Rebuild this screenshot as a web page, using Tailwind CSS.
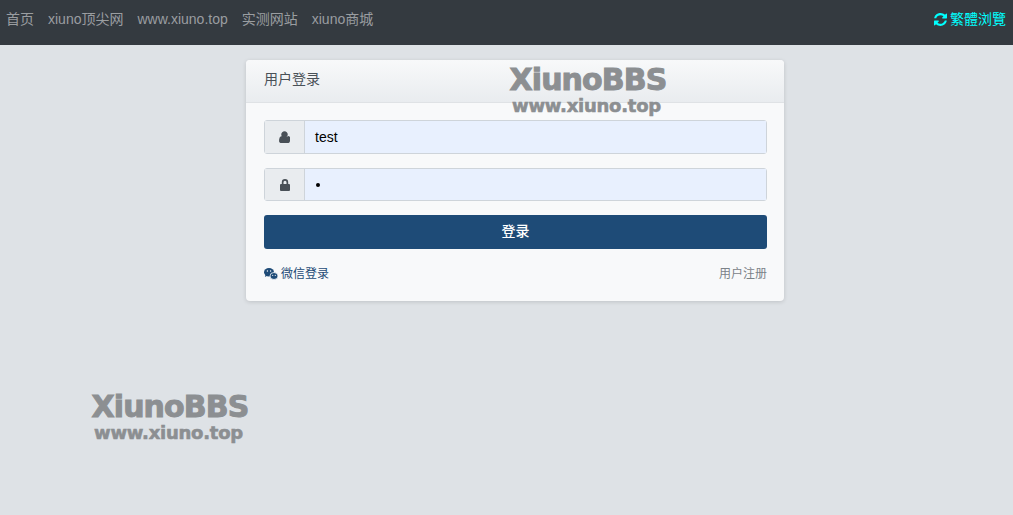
<!DOCTYPE html>
<html lang="zh">
<head>
<meta charset="utf-8">
<script src="https://cdn.jsdelivr.net/npm/@tailwindcss/browser@4"></script>
<title>用户登录</title>
</head>
<body class="relative h-[515px] w-[1013px] overflow-hidden bg-[#dee2e6] font-['Liberation_Sans','Noto_Sans_CJK_SC',sans-serif] text-sm">
<nav class="flex h-[45px] items-start justify-between bg-[#343a40] pl-[6px] pr-[7px] pt-[11px] text-sm leading-[17px]">
  <div class="flex gap-[14px] text-[#9a9da0]">
    <a>首页</a><a>xiuno顶尖网</a><a>www.xiuno.top</a><a>实测网站</a><a>xiuno商城</a>
  </div>
  <a class="flex items-center gap-[3px] text-[#00ffff]">
    <svg class="h-[13px] w-[13px]" viewBox="0 0 1536 1536" fill="currentColor"><path d="M1511 928q0 5-1 7-64 268-268 434.500T764 1536q-146 0-282.500-55T238 1324l-129 129q-19 19-45 19t-45-19-19-45V960q0-26 19-45t45-19h448q26 0 45 19t19 45-19 45l-137 137q71 66 161 102t187 36q134 0 250-65t186-179q11-17 53-117 8-23 30-23h192q13 0 22.500 9.500t9.500 22.500zM1536 128v448q0 26-19 45t-45 19h-448q-26 0-45-19t-19-45 19-45l138-138q-148-137-349-137-134 0-250 65T332 480q-11 17-53 117-8 23-30 23H50q-13 0-22.500-9.500T18 588v-7q65-268 270-434.500T768 0q146 0 284 55.500T1297 212l130-129q19-19 45-19t45 19 19 45z"/></svg>
    <span>繁體浏覽</span>
  </a>
</nav>

<main class="ml-[246px] mt-[15px] w-[538px] rounded-[4px] bg-[#f8f9fa] shadow-[0_1px_4px_rgba(0,0,0,0.14)]">
  <div class="flex h-[43px] items-center rounded-t-[4px] border-b border-[#dfe2e5] bg-gradient-to-b from-[#f8f9fa] to-[#e9ecef] px-[18px] pb-[4px] text-[#495057]">用户登录</div>
  <form class="flex flex-col px-[18px] pr-[17px] pt-[17px]">
    <div class="flex h-[34px] rounded-[3px] border border-[#ced4da]">
      <span class="flex w-[40px] items-center justify-center border-r border-[#ced4da] bg-[#e9ecef] text-[#495057]">
        <svg class="h-[13px] w-[11px]" viewBox="0 0 1280 1536" fill="currentColor"><path d="M1280 1271q0 120-73 189.500t-194 69.500H267q-121 0-194-69.500T0 1271q0-53 3.500-103.500t14-109T44 950t43-97.500 62-81 85.500-53.500T346 698q9 0 42 21.500t74.500 48 108 48T704 837t133.500-21.500 108-48 74.500-48 42-21.500q61 0 111.500 20t85.500 53.500 62 81 43 97.500 26.500 108.500 14 109 3.500 103.500zM1024 512q0 159-112.500 271.500T640 896 368.500 783.500 256 512t112.500-271.500T640 128t271.500 112.500T1024 512z" transform="translate(0 -100)"/></svg>
      </span>
      <div class="flex flex-1 items-center bg-[#e8f0fe] px-[10px] text-[14px] text-black">test</div>
    </div>
    <div class="mt-[14px] flex h-[33px] rounded-[3px] border border-[#ced4da]">
      <span class="flex w-[40px] items-center justify-center border-r border-[#ced4da] bg-[#e9ecef] text-[#495057]">
        <svg class="h-[12px] w-[10px]" viewBox="0 0 10 12" fill="currentColor"><path fill-rule="evenodd" d="M1.800 5V3.300a3.200 3.200 0 0 1 6.400 0V5H9a1 1 0 0 1 1 1v5a1 1 0 0 1-1 1H1a1 1 0 0 1-1-1V6a1 1 0 0 1 1-1zM3.500 5h3V3.300a1.500 1.500 0 0 0-3 0z"/></svg>
      </span>
      <div class="flex flex-1 items-center bg-[#e8f0fe] px-[10px] text-black">
        <span class="ml-[1px] h-[4px] w-[4px] rounded-full bg-black"></span>
      </div>
    </div>
    <button type="button" class="mt-[14px] h-[34px] rounded-[3px] bg-[#1e4b77] pb-[2px] text-sm font-medium text-white">登录</button>
    <div class="flex items-center justify-between pb-[19px] pt-[17px] text-[12px] leading-[16px]">
      <a class="flex items-center gap-[3px] text-[#1e4b77]">
        <svg class="h-[12px] w-[14px]" viewBox="0 0 14 12" fill="currentColor"><ellipse cx="5" cy="4.300" rx="5" ry="4.200"/><path d="M1.500 7l-.6 2 2.300-1.200z"/><ellipse cx="10" cy="8" rx="4" ry="3.500" stroke="#f8f9fa" stroke-width=".8"/><circle cx="3.400" cy="3" r=".7" fill="#f8f9fa"/><circle cx="6.600" cy="3" r=".7" fill="#f8f9fa"/><circle cx="8.700" cy="7.300" r=".6" fill="#f8f9fa"/><circle cx="11.300" cy="7.300" r=".6" fill="#f8f9fa"/></svg>
        <span>微信登录</span>
      </a>
      <a class="text-[#7b8288]">用户注册</a>
    </div>
  </form>
</main>

<div class="absolute left-[509px] top-[63px] flex w-[158px] flex-col font-['DejaVu_Sans',sans-serif] font-bold text-[#8c8f92]">
  <span class="text-center text-[30px] leading-[34px] tracking-[-0.9px] [-webkit-text-stroke:1px_#8c8f92]">XiunoBBS</span>
  <span class="-mt-[1px] pr-[3px] text-center text-[18px] leading-[19px] tracking-[-0.25px] [-webkit-text-stroke:0.6px_#8c8f92]">www.xiuno.top</span>
</div>
<div class="absolute left-[91px] top-[390px] flex w-[158px] flex-col font-['DejaVu_Sans',sans-serif] font-bold text-[#8c8f92]">
  <span class="text-center text-[30px] leading-[34px] tracking-[-0.9px] [-webkit-text-stroke:1px_#8c8f92]">XiunoBBS</span>
  <span class="-mt-[1px] pr-[3px] text-center text-[18px] leading-[19px] tracking-[-0.25px] [-webkit-text-stroke:0.6px_#8c8f92]">www.xiuno.top</span>
</div>
</body>
</html>
